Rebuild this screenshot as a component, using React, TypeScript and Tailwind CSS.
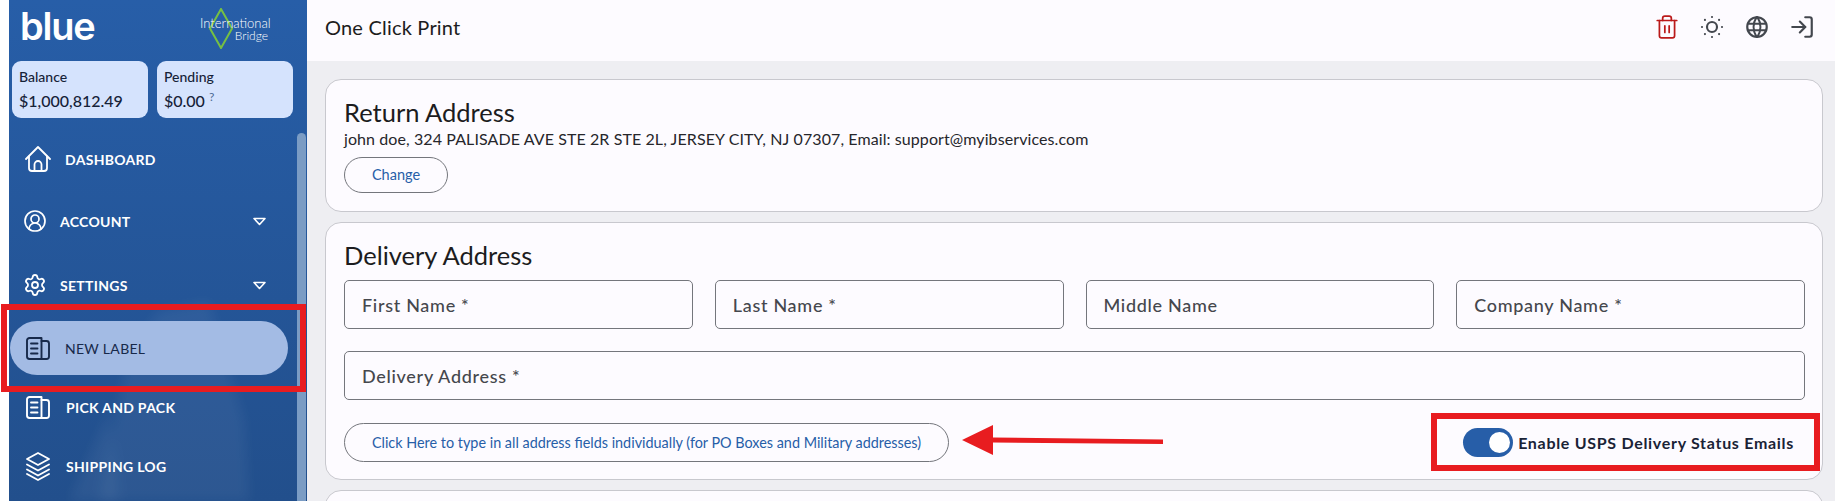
import { CircleUserRound, LogIn, Settings, SunDim, Trash2 } from 'lucide-react';
import { TbWorld } from 'react-icons/tb';

function HomeIcon() {
  return (
    <svg viewBox="0 0 26 26" className="size-[26px]" fill="none" stroke="currentColor" strokeWidth="1.8" strokeLinecap="round" strokeLinejoin="round">
      <path d="M1 13 13 1l12 12" />
      <path d="M4 10.500V22a3 3 0 0 0 3 3h12a3 3 0 0 0 3-3V10.500" />
      <path d="M9.500 25v-6.500a3.500 3.500 0 0 1 7 0V25" />
    </svg>
  );
}

function LabelIcon() {
  return (
    <svg viewBox="0 0 24 23" className="h-[23px] w-[24px]" fill="none" stroke="currentColor" strokeWidth="1.9" strokeLinecap="round" strokeLinejoin="round">
      <path d="M1 3.500A2.500 2.500 0 0 1 3.500 1H15.500V22H3.500A2.500 2.500 0 0 1 1 19.500Z" />
      <path d="M15.500 4H20.500A2.500 2.500 0 0 1 23 6.500V19.500A2.500 2.500 0 0 1 20.500 22H15.500" />
      <path d="M5 6.500H11.500M5 11.500H11.500M5 16.500H11.500" />
    </svg>
  );
}

function StackIcon() {
  return (
    <svg viewBox="0 0 24 29" className="h-[29px] w-[24px]" fill="none" stroke="currentColor" strokeWidth="1.8" strokeLinecap="round" strokeLinejoin="round">
      <path d="M12 1 23 7 12 13 1 7Z" />
      <path d="M1 12.500 12 18.500 23 12.500" />
      <path d="M1 17.500 12 23.500 23 17.500" />
      <path d="M1 22 12 28 23 22" />
    </svg>
  );
}

function Caret() {
  return (
    <svg viewBox="0 0 13 9" className="ml-auto mr-[41px] h-[9px] w-[13px]" fill="none" stroke="currentColor" strokeWidth="1.6" strokeLinejoin="round">
      <path d="M1 1.500H12L6.500 7.500Z" />
    </svg>
  );
}

function DeliveryField({ label }: { label: string }) {
  return (
    <input
      placeholder={label}
      className="h-[49px] w-full rounded-[5px] border border-[#74767c] bg-transparent px-[17px] text-[18px] font-medium tracking-[0.7px] placeholder:text-[#45474d]"
    />
  );
}

export default function App() {
  return (
    <div className="relative flex h-[501px] w-[1835px] overflow-hidden bg-white pl-[9px] font-['Lato',sans-serif] text-[#1c1c20]">
      <aside className="relative h-full w-[298px] shrink-0 overflow-hidden bg-gradient-to-b from-[#275ea8] to-[#224f8c] text-white">
        <svg viewBox="0 0 298 200" className="absolute bottom-0 left-0 h-[200px] w-[298px] blur-[6px]" fill="#ffffff" fillOpacity="0.05">
          <path d="M90 200 120 50 150 10 200 0 235 120 240 200Z" />
          <path d="M60 200 100 110 110 200Z" />
        </svg>

        <div className="relative flex h-[61px] items-start justify-between pl-[11px] pr-[39px]">
          <span className="mt-[3px] font-['Inter',sans-serif] text-[38px] leading-[46px] font-semibold tracking-[-1.2px]">blue</span>
          <div className="relative mt-[8px] h-[41px] w-[68px] font-light">
            <svg viewBox="0 0 24 41" className="absolute left-[9px] top-0 h-[41px] w-[24px]" fill="none" stroke="#76c043" strokeWidth="2">
              <path d="M12 1 23 20.500 12 40 1 20.500Z" />
            </svg>
            <p className="relative mt-[8px] text-[13px] leading-[14px]">International</p>
            <p className="relative text-right text-[12px] leading-[12px]">Bridge</p>
          </div>
        </div>

        <div className="relative flex gap-[9px] pl-[3px]">
          <div className="h-[57px] w-[136px] rounded-[9px] bg-[#d5e3fd] pl-[7px] pt-[8px] text-[#152238]">
            <p className="text-[14px] leading-[16px] font-medium">Balance</p>
            <p className="mt-[6px] text-[16px] leading-[20px] font-medium">$1,000,812.49</p>
          </div>
          <div className="h-[57px] w-[136px] rounded-[9px] bg-[#d5e3fd] pl-[7px] pt-[8px] text-[#152238]">
            <p className="text-[14px] leading-[16px] font-medium">Pending</p>
            <p className="mt-[6px] text-[16px] leading-[20px] font-medium">
              $0.00 <sup className="text-[12px] font-normal text-[#4c6a96]">?</sup>
            </p>
          </div>
        </div>

        <nav className="relative mt-[10px] flex flex-col text-[14px] font-bold tracking-[0.3px]">
          <a className="flex h-[62px] items-center gap-[14px] pl-[16px]">
            <HomeIcon />
            <span>DASHBOARD</span>
          </a>
          <a className="flex h-[62px] items-center gap-[13px] pl-[14px]">
            <CircleUserRound className="size-[24px]" strokeWidth={1.7} />
            <span>ACCOUNT</span>
            <Caret />
          </a>
          <a className="flex h-[66px] items-center gap-[13px] pl-[14px]">
            <Settings className="size-[24px]" strokeWidth={1.8} />
            <span>SETTINGS</span>
            <Caret />
          </a>
          <a className="ml-[1px] mt-[3px] flex h-[54px] w-[278px] items-center gap-[15px] rounded-full bg-[#a3bbe4] pl-[16px] font-normal text-[#17294a]">
            <LabelIcon />
            <span>NEW LABEL</span>
          </a>
          <a className="flex h-[64px] items-center gap-[16px] pl-[17px]">
            <LabelIcon />
            <span>PICK AND PACK</span>
          </a>
          <a className="flex h-[54px] items-center gap-[16px] pl-[17px]">
            <StackIcon />
            <span>SHIPPING LOG</span>
          </a>
        </nav>

        <div className="absolute bottom-0 right-[1px] top-[133px] w-[9px] rounded-t-full bg-[#7b9cc4]" />
      </aside>

      <main className="flex min-w-0 flex-1 flex-col bg-[#eeeef2]">
        <header className="flex h-[61px] shrink-0 items-center bg-[#fdfbff] pb-[8px] pl-[18px] pr-[11px]">
          <h1 className="text-[20px] tracking-[0.2px]">One Click Print</h1>
          <div className="ml-auto grid grid-cols-[repeat(4,45px)] place-items-center text-[#43474e]">
            <Trash2 className="size-[26px] text-[#ba1a1a]" strokeWidth={1.6} />
            <SunDim className="size-[30px]" strokeWidth={1.7} />
            <TbWorld className="size-[26px]" />
            <LogIn className="size-[26px]" strokeWidth={2} />
          </div>
        </header>

        <div className="flex flex-col gap-[10px] pl-[18px] pr-[12px] pt-[18px]">
          <section className="h-[133px] shrink-0 rounded-[16px] border border-[#c8c8ce] bg-[#fdfbff] pl-[18px] pt-[16px]">
            <h2 className="text-[25.500px] leading-[32px]">Return Address</h2>
            <p className="mt-[1px] text-[16px] leading-[20px] tracking-[0.09px] text-[#26262b]">
              john doe, 324 PALISADE AVE STE 2R STE 2L, JERSEY CITY, NJ 07307, Email: support@myibservices.com
            </p>
            <button className="mt-[8px] h-[36px] w-[104px] rounded-full border border-[#74767c] text-[14.500px] text-[#275ea8]">
              Change
            </button>
          </section>

          <section className="h-[258px] shrink-0 rounded-[16px] border border-[#c8c8ce] bg-[#fdfbff] pl-[18px] pr-[17px] pt-[16px]">
            <h2 className="text-[25.500px] leading-[32px]">Delivery Address</h2>
            <div className="mt-[9px] grid grid-cols-4 gap-[22px]">
              <DeliveryField label="First Name *" />
              <DeliveryField label="Last Name *" />
              <DeliveryField label="Middle Name" />
              <DeliveryField label="Company Name *" />
            </div>
            <div className="mt-[22px]">
              <DeliveryField label="Delivery Address *" />
            </div>
            <div className="mt-[23px] flex items-center justify-between">
              <button className="h-[39px] w-[605px] rounded-full border border-[#74767c] text-[14.400px] text-[#275ea8]">
                Click Here to type in all address fields individually (for PO Boxes and Military addresses)
              </button>
              <label className="mr-[11px] flex items-center gap-[5px] text-[16px] font-bold tracking-[0.7px] text-[#1a2336]">
                <span className="flex h-[29px] w-[50px] items-center justify-end rounded-full bg-[#275ea8] pr-[3px]">
                  <span className="size-[21px] rounded-full bg-white" />
                </span>
                Enable USPS Delivery Status Emails
              </label>
            </div>
          </section>

          <section className="h-[200px] shrink-0 rounded-[16px] border border-[#c8c8ce] bg-[#fdfbff]" />
        </div>
      </main>

      <div className="absolute left-[1px] top-[304px] h-[88px] w-[305px] border-[6px] border-[#e81c20]" />
      <div className="absolute left-[1431px] top-[413px] h-[58px] w-[389px] border-[6px] border-[#e81c20]" />
      <svg viewBox="0 0 202 32" className="absolute left-[962px] top-[425px] h-[32px] w-[202px]" fill="#e81c20">
        <path d="M0 15 31 0V12.500L201 14.500V19L31 17.500V30Z" />
      </svg>
    </div>
  );
}
